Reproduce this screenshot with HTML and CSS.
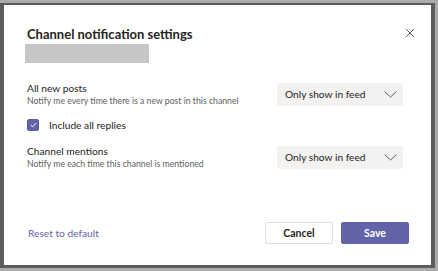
FILE: index.html
```html
<!DOCTYPE html>
<html lang="en">
<head>
    <meta charset="UTF-8">
    <meta name="viewport" content="width=device-width, initial-scale=1.0">
    <title>Channel notification settings</title>
    <link rel="stylesheet" href="styles.css">
</head>
<body>

    <div class="dialog">
        <div class="dialog-header">
            <h1 class="dialog-title">Channel notification settings</h1>
            <button class="close-btn" aria-label="Close">
                <svg width="10" height="10" viewBox="0 0 10 10">
                    <path d="M1 1 L9 9 M9 1 L1 9" stroke="#616161" stroke-width="1" fill="none"/>
                </svg>
            </button>
        </div>
        <div class="channel-name"></div>

        <div class="settings">
            <div class="setting-row">
                <div class="setting-text">
                    <div class="setting-label">All new posts</div>
                    <div class="setting-desc">Notify me every time there is a new post in this channel</div>
                </div>
                <div class="dropdown">
                    <span>Only show in feed</span>
                    <svg width="13" height="7" viewBox="0 0 13 7">
                        <path d="M0.5 0.5 L6.5 6 L12.5 0.5" stroke="#616161" stroke-width="1" fill="none"/>
                    </svg>
                </div>
            </div>

            <label class="check-row">
                <span class="checkbox">
                    <svg width="7" height="6" viewBox="0 0 7 6">
                        <path d="M0.8 3 L2.7 4.8 L6.2 1" stroke="#fff" stroke-width="1" fill="none"/>
                    </svg>
                </span>
                Include all replies
            </label>

            <div class="setting-row">
                <div class="setting-text">
                    <div class="setting-label">Channel mentions</div>
                    <div class="setting-desc">Notify me each time this channel is mentioned</div>
                </div>
                <div class="dropdown">
                    <span>Only show in feed</span>
                    <svg width="13" height="7" viewBox="0 0 13 7">
                        <path d="M0.5 0.5 L6.5 6 L12.5 0.5" stroke="#616161" stroke-width="1" fill="none"/>
                    </svg>
                </div>
            </div>
        </div>

        <div class="dialog-footer">
            <a class="reset-link" href="#">Reset to default</a>
            <div class="buttons">
                <button class="btn btn-cancel">Cancel</button>
                <button class="btn btn-save">Save</button>
            </div>
        </div>
    </div>

</body>
</html>
```

FILE: styles.css
```css
/* Page */
body {
    font-family: 'Segoe UI', Lato, sans-serif;
    background-color: #ababab;
    margin: 0;
    padding: 0;
    height: 271px;
    overflow: hidden;
    color: #252423;
}

/* Dialog window */
.dialog {
    width: 427px;
    height: 260px;
    margin-top: 3px;
    border-style: solid;
    border-color: #5c5c5c;
    border-width: 2px 4px 3px 4px;
    background-color: #fff;
    display: flex;
    flex-direction: column;
}

.dialog-header {
    display: flex;
    justify-content: space-between;
    align-items: flex-start;
    padding: 20px 22px 0 23px;
}

.dialog-title {
    margin: 0;
    font-size: 13px;
    font-weight: 700;
    line-height: 19px;
}

.close-btn {
    width: 20px;
    height: 20px;
    margin: -2px -11px 0 0;
    padding: 0;
    border: none;
    background: none;
    display: flex;
    align-items: center;
    justify-content: center;
}

/* Blurred channel name */
.channel-name {
    width: 124px;
    height: 19px;
    margin-left: 21px;
    background-color: #c6c6c6;
}

/* Settings */
.settings {
    padding: 18px 28px 0 23px;
}

.setting-row {
    display: flex;
    justify-content: space-between;
    align-items: center;
}

.setting-label {
    font-size: 10.2px;
    line-height: 14px;
}

.setting-desc {
    font-size: 8.7px;
    line-height: 12px;
    color: #616161;
}

.dropdown {
    width: 126px;
    height: 23px;
    box-sizing: border-box;
    padding: 0 6px 0 8px;
    background-color: #f3f2f1;
    border-radius: 2px;
    display: flex;
    align-items: center;
    justify-content: space-between;
    font-size: 10.2px;
}

/* Checkbox */
.check-row {
    display: flex;
    align-items: center;
    gap: 10px;
    margin: 12px 0 13px 0;
    font-size: 10.2px;
}

.checkbox {
    width: 10px;
    height: 10px;
    background-color: #6264a7;
    border: 1px solid #5b5fa0;
    border-radius: 2px;
    display: flex;
    align-items: center;
    justify-content: center;
}

/* Footer */
.dialog-footer {
    margin-top: auto;
    padding: 0 22px 21px 24px;
    display: flex;
    justify-content: space-between;
    align-items: center;
}

.reset-link {
    color: #6264a7;
    text-decoration: none;
    font-size: 10.2px;
}

.buttons {
    display: flex;
    gap: 8px;
}

.btn {
    width: 68px;
    height: 22px;
    font-family: inherit;
    font-size: 10.5px;
    font-weight: 700;
    border-radius: 2px;
    padding: 0;
}

.btn-cancel {
    background-color: #fff;
    border: 1px solid #e1dfdd;
    color: #252423;
}

.btn-save {
    background-color: #6264a7;
    border: 1px solid #6264a7;
    color: #fff;
}
```
